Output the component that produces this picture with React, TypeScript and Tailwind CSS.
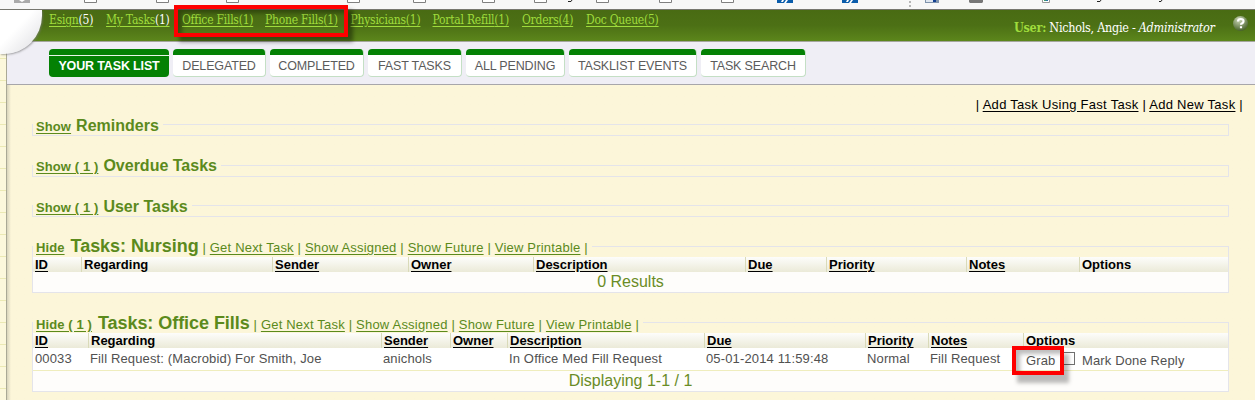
import React from "react";

const NAV = [
  { label: "Esign", count: "(5)", cls: "w-[57px]", white: true },
  { label: "My Tasks", count: "(1)", cls: "w-[76px]", white: true },
  { label: "Office Fills", count: "(1)", cls: "w-[83px]" },
  { label: "Phone Fills", count: "(1)", cls: "w-[85.5px]" },
  { label: "Physicians", count: "(1)", cls: "w-[82px]" },
  { label: "Portal Refill", count: "(1)", cls: "w-[89.5px]" },
  { label: "Orders", count: "(4)", cls: "w-[64px]" },
  { label: "Doc Queue", count: "(5)", cls: "w-[80px]" },
];

const TABS = [
  { label: "DELEGATED", cls: "w-[93px]" },
  { label: "COMPLETED", cls: "w-[94px]" },
  { label: "FAST TASKS", cls: "w-[94px]" },
  { label: "ALL PENDING", cls: "w-[99px]" },
  { label: "TASKLIST EVENTS", cls: "w-[128px]" },
  { label: "TASK SEARCH", cls: "w-[105px]" },
];

const HEADS = ["ID", "Regarding", "Sender", "Owner", "Description", "Due", "Priority", "Notes", "Options"];
const BOXES = [84, 156, 226, 347, 413, 482, 534, 596, 659, 721];

function Toolbar() {
  return (
    <svg className="block h-[9px] w-full bg-[#f7f7f7]" viewBox="0 0 1255 9" width="1255" height="9">
      <path d="M14 0h16v3H14z" fill="#aaa" />
      <path d="M19 0h6l-3 2z" fill="#fff" />
      {BOXES.map((x) => (
        <path key={x} d={`M${x + 0.5} -1v3.5h12v-3.5`} fill="#fff" stroke="#808080" />
      ))}
      {[777, 842].map((x) => (
        <g key={x}>
          <path d={`M${x} 0h16v3h-16z`} fill="#0a5cab" />
          <path d={`M${x + 5} 0h2l-1 2h-2zM${x + 9} 0h2l-2 3h-2z`} fill="#fff" />
        </g>
      ))}
      <path d="M909 1h2v2h-2zM909 5h2v2h-2z" fill="#b5b5b5" />
      <path d="M925 0h14v3h-14z" fill="#7f93ac" />
      <path d="M926 0h7v2h-7z" fill="#dfe6ef" />
      <path d="M933 0h3v2h-3z" fill="#123f91" />
      <path d="M969 0h14v2l-1 1h-12l-1-1z" fill="#777" />
      <path d="M1042.500 -1v3.500h7v-3.500" fill="#fff" stroke="#999" />
      <path d="M1044 0h2v1h-2z" fill="#3d9b70" />
      <path d="M1046 0h2v1h-2z" fill="#2771a8" />
      <path d="M568 1.500h3l1-1.500M1097 1.500h3l1-1.500M1159 1.500h2l1-1.500" fill="none" stroke="#222" />
    </svg>
  );
}

function Legend({ toggle, title, links, size }: { toggle: string; title: string; links?: boolean; size: string }) {
  return (
    <div className={`flex leading-[18px] ${size}`}>
      <div className={`flex items-baseline whitespace-pre bg-[#fcf6d9] pl-[3px] text-[#5b8a1c] ${links ? "pr-0" : "pr-1"}`}>
        <a className="text-[13px] font-bold tracking-[0.1px] underline underline-offset-2">{toggle}</a>
        <b className={links ? "ml-[6px] text-[18px] tracking-[-0.05px]" : "ml-[5px] text-[16px]"}>{title}</b>
        {links && (
          <span className="text-[13px] tracking-[0.2px]">
            {" | "}<u className="underline-offset-2">Get Next Task</u>{" | "}<u className="underline-offset-2">Show Assigned</u>{" | "}
            <u className="underline-offset-2">Show Future</u>{" | "}<u className="underline-offset-2">View Printable</u>{" | "}
          </span>
        )}
      </div>
    </div>
  );
}

function HeadRow({ cols }: { cols: string }) {
  return (
    <div className={`grid h-[15px] bg-gradient-to-b from-[#fdfdfb] to-[#ebead8] text-[13px] font-bold leading-[15px] text-black ${cols}`}>
      {HEADS.map((h, i) => (
        <div key={h} className={i === 0 ? "pl-[2px]" : "border-l border-[#d9dab9] pl-[2px]"}>
          <span className={h === "Regarding" || h === "Options" ? "" : "underline underline-offset-2"}>{h}</span>
        </div>
      ))}
    </div>
  );
}

const COLS_A = "grid-cols-[48px_191px_136px_125px_212px_81px_140px_113px_149px]";
const COLS_B = "grid-cols-[55px_293px_69px_57px_197px_161px_63px_95px_205px]";
const PANEL = "w-[1197px] border border-[#e4e4ea]";
const SMALL = "-mt-2 h-[18px]";
const RAISED = "-mt-[9px] h-[18px]";

export default function App() {
  return (
    <div className="relative h-[400px] w-[1255px] overflow-hidden bg-[#fcf6d9] font-['Liberation_Sans',Arial,sans-serif]">
      <Toolbar />
      <header className="h-[33px] border-b border-t border-b-[#a4a69d] border-t-[#77776f] bg-gradient-to-b from-[#496b13] via-[#4c7015] to-[#5c861b]">
        <div className="flex font-['DejaVu_Serif_Condensed','DejaVu_Serif',serif] text-[12px]">
          <nav className="flex w-[964px] pl-[49px] pt-[1px] leading-[18px] text-[#9fdc3c]">
            {NAV.map((n) => (
              <div key={n.label} className={`shrink-0 whitespace-nowrap tracking-[-0.24px] ${n.cls}`}>
                <span className="underline underline-offset-2">
                  {n.label}<span className={n.white ? "text-white" : ""}>{n.count}</span>
                </span>
              </div>
            ))}
          </nav>
          <div className="w-[262px] whitespace-nowrap pl-[50px] pt-[9px] text-[12.5px] leading-[18px] tracking-[-0.27px] text-white">
            <b className="text-[#9fdc3c]">User:</b> Nichols, Angie - <i>Administrator</i>
          </div>
          <svg className="ml-[7px] mt-[5px]" width="16" height="17" viewBox="0 0 16 17">
            <defs>
              <radialGradient id="help" cx=".4" cy=".25" r=".75"><stop stopColor="#ccd8b8" /><stop offset="1" stopColor="#48622b" /></radialGradient>
            </defs>
            <circle cx="7.500" cy="8.500" r="7.500" fill="url(#help)" />
            <path d="M5 6.500q0-2.500 2.800-2.500t2.700 2.200q0 1.200-1.300 2-1.200.6-1.200 1.600M8 11.300v2" fill="none" stroke="#fff" strokeWidth="2.200" />
          </svg>
        </div>
      </header>
      <div className="flex h-[358px]">
        <aside className="flex w-[7px] flex-col border-r border-[#aaa996] bg-[#fcf8dc] pt-[16px]">
          {Array.from({ length: 16 }, (_, i) => (
            <div key={i} className="h-[22px] shrink-0 border-t border-[#ebe9b4]" />
          ))}
        </aside>
        <div className="flex-1">
          <div className="flex h-[43px] gap-1 border-b border-[#a7a6aa] bg-[#efeef5] pl-[42px] pt-[7px] text-[12.5px] tracking-[-0.15px]">
            <div className="h-7 w-[120px] overflow-hidden rounded-[4px] bg-[#048104] text-center font-bold text-white">
              <div className="h-[7px] border-b border-[#e9f5e9]" />
              <div className="leading-[20px]">YOUR TASK LIST</div>
            </div>
            {TABS.map((t) => (
              <div key={t.label} className={`h-7 overflow-hidden whitespace-nowrap rounded-[4px] border-b border-r border-[#c4dfc5] bg-white text-center text-[#5b5b5b] ${t.cls}`}>
                <div className="h-[6px] bg-[#048104]" />
                <div className="pt-px leading-[21px]">{t.label}</div>
              </div>
            ))}
          </div>
          <main className="h-[315px] bg-gradient-to-r from-[#d8d4bc] to-[#fcf6d9] to-[4px] pl-[25px]">
            <div className="h-[39px] w-[1211px] whitespace-pre pt-[11px] text-right text-[13px] leading-[18px] tracking-[0.28px] text-black">
              | <u className="underline-offset-2">Add Task Using Fast Task</u> | <u className="underline-offset-2">Add New Task</u> |
            </div>
            <section className={`h-3 ${PANEL}`}><Legend size={SMALL} toggle="Show" title="Reminders" /></section>
            <section className={`mt-[29px] h-3 ${PANEL}`}><Legend size={RAISED} toggle="Show ( 1 )" title="Overdue Tasks" /></section>
            <section className={`mt-[28px] h-3 ${PANEL}`}><Legend size={SMALL} toggle="Show ( 1 )" title="User Tasks" /></section>
            <section className={`mt-[29px] h-[47px] ${PANEL}`}>
              <Legend size="-mt-[10px] h-5" toggle="Hide" title="Tasks: Nursing" links />
              <HeadRow cols={COLS_A} />
              <div className="h-5 bg-[#fefdfb] text-center text-[16px] leading-[19px] text-[#6a8c26]">0 Results</div>
            </section>
            <section className={`mt-[29px] h-[70px] ${PANEL}`}>
              <Legend size="-mt-[9px] h-[19px]" toggle="Hide ( 1 )" title="Tasks: Office Fills" links />
              <HeadRow cols={COLS_B} />
              <div className={`grid h-[23px] whitespace-nowrap border-b border-[#efedbd] bg-white text-[13px] leading-[21px] tracking-[0.14px] text-[#515151] ${COLS_B}`}>
                <div className="pl-[2px]">00033</div>
                <div className="pl-[2px]">Fill Request: (Macrobid) For Smith, Joe</div>
                <div className="pl-[2px]">anichols</div>
                <div />
                <div className="pl-[2px]">In Office Med Fill Request</div>
                <div className="pl-[2px]">05-01-2014 11:59:48</div>
                <div className="pl-[2px]">Normal</div>
                <div className="pl-[2px]">Fill Request</div>
                <div className="flex pl-[3px] pt-[2px]">
                  <span className="w-[36px]">Grab</span>
                  <span className="mt-[2px] h-[13px] w-[13px] border border-[#707070] bg-white" />
                  <span className="ml-[7px]">Mark Done Reply</span>
                </div>
              </div>
              <div className="h-5 bg-[#fefdfb] text-center text-[16px] leading-[19px] text-[#6a8c26]">Displaying 1-1 / 1</div>
            </section>
          </main>
        </div>
      </div>
      <div className="absolute left-0 top-[10px] h-[44px] w-[42px] rounded-br-[38px] bg-gradient-to-br from-white from-40% to-[#dcdce0] shadow-[1px_1px_2px_#77777799]" />
      <div className="absolute left-[174px] top-[5px] h-8 w-[174px] border-4 border-[#fe0000] shadow-[5px_5px_4px_#00000066,inset_4px_4px_4px_#00000055]" />
      <div className="absolute left-[1012px] top-[346px] h-[29px] w-[52px] border-4 border-[#fe0000] shadow-[5px_8px_4px_#00000044,inset_4px_4px_4px_#00000044]" />
    </div>
  );
}
